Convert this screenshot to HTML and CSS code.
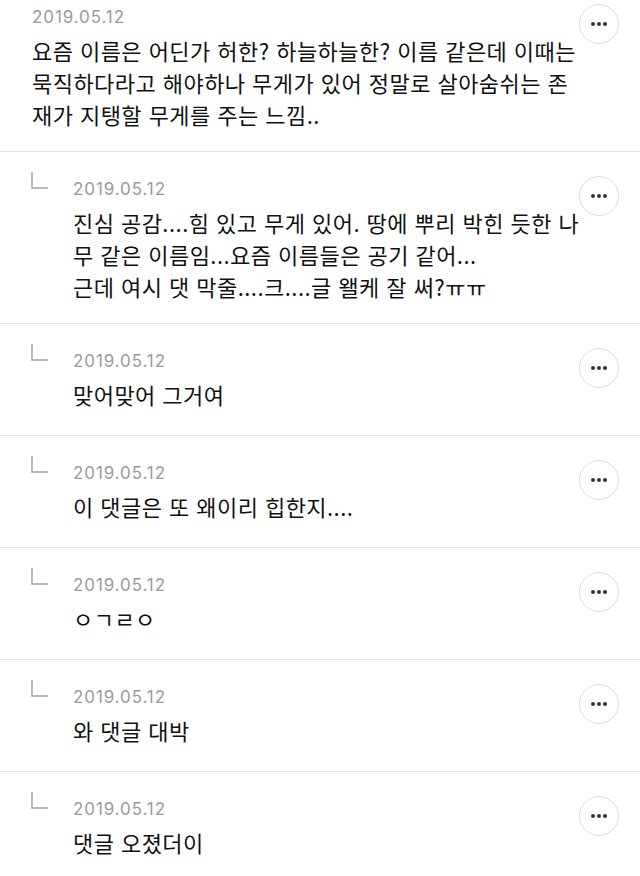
FILE: index.html
```html
<!DOCTYPE html>
<html lang="ko">
<head>
    <meta charset="UTF-8">
    <meta name="viewport" content="width=device-width, initial-scale=1.0">
    <title>댓글</title>
    <link rel="stylesheet" href="styles.css">
</head>
<body>
    <ul class="comments">
        <li class="comment">
            <div class="comment-body">
                <div class="comment-head">
                    <span class="date">2019.05.12</span>
                    <button class="more" aria-label="더보기"><i></i><i></i><i></i></button>
                </div>
                <p class="text">요즘 이름은 어딘가 허한? 하늘하늘한? 이름 같은데 이때는 묵직하다라고 해야하나 무게가 있어 정말로 살아숨쉬는 존재가 지탱할 무게를 주는 느낌..</p>
            </div>
        </li>
        <li class="comment reply">
            <svg class="reply-mark" width="17" height="17" viewBox="0 0 17 17"><path d="M1 0V16H17" fill="none" stroke="#a3a3a3" stroke-width="1.5"/></svg>
            <div class="comment-body">
                <div class="comment-head">
                    <span class="date">2019.05.12</span>
                    <button class="more" aria-label="더보기"><i></i><i></i><i></i></button>
                </div>
                <p class="text">진심 공감....힘 있고 무게 있어. 땅에 뿌리 박힌 듯한 나무 같은 이름임...요즘 이름들은 공기 같어...<br>근데 여시 댓 막줄....크....글 왤케 잘 써?ㅠㅠ</p>
            </div>
        </li>
        <li class="comment reply">
            <svg class="reply-mark" width="17" height="17" viewBox="0 0 17 17"><path d="M1 0V16H17" fill="none" stroke="#a3a3a3" stroke-width="1.5"/></svg>
            <div class="comment-body">
                <div class="comment-head">
                    <span class="date">2019.05.12</span>
                    <button class="more" aria-label="더보기"><i></i><i></i><i></i></button>
                </div>
                <p class="text">맞어맞어 그거여</p>
            </div>
        </li>
        <li class="comment reply">
            <svg class="reply-mark" width="17" height="17" viewBox="0 0 17 17"><path d="M1 0V16H17" fill="none" stroke="#a3a3a3" stroke-width="1.5"/></svg>
            <div class="comment-body">
                <div class="comment-head">
                    <span class="date">2019.05.12</span>
                    <button class="more" aria-label="더보기"><i></i><i></i><i></i></button>
                </div>
                <p class="text">이 댓글은 또 왜이리 힙한지....</p>
            </div>
        </li>
        <li class="comment reply">
            <svg class="reply-mark" width="17" height="17" viewBox="0 0 17 17"><path d="M1 0V16H17" fill="none" stroke="#a3a3a3" stroke-width="1.5"/></svg>
            <div class="comment-body">
                <div class="comment-head">
                    <span class="date">2019.05.12</span>
                    <button class="more" aria-label="더보기"><i></i><i></i><i></i></button>
                </div>
                <p class="text">ㅇㄱㄹㅇ</p>
            </div>
        </li>
        <li class="comment reply">
            <svg class="reply-mark" width="17" height="17" viewBox="0 0 17 17"><path d="M1 0V16H17" fill="none" stroke="#a3a3a3" stroke-width="1.5"/></svg>
            <div class="comment-body">
                <div class="comment-head">
                    <span class="date">2019.05.12</span>
                    <button class="more" aria-label="더보기"><i></i><i></i><i></i></button>
                </div>
                <p class="text">와 댓글 대박</p>
            </div>
        </li>
        <li class="comment reply">
            <svg class="reply-mark" width="17" height="17" viewBox="0 0 17 17"><path d="M1 0V16H17" fill="none" stroke="#a3a3a3" stroke-width="1.5"/></svg>
            <div class="comment-body">
                <div class="comment-head">
                    <span class="date">2019.05.12</span>
                    <button class="more" aria-label="더보기"><i></i><i></i><i></i></button>
                </div>
                <p class="text">댓글 오졌더이</p>
            </div>
        </li>
    </ul>
</body>
</html>
```

FILE: styles.css
```css
body {
    margin: 0;
    background: #fff;
    color: #111;
    font-family: "Noto Sans CJK KR", "Noto Sans", sans-serif;
}
.comments {
    list-style: none;
    margin: 0;
    padding: 0;
}
.comment {
    display: flex;
    align-items: flex-start;
    padding: 4px 21px 21px 32px;
    border-bottom: 1px solid #e6e6e6;
}
.comment.reply {
    padding-top: 20px;
    padding-left: 31px;
}
.reply-mark {
    flex: none;
    margin-right: 25px;
}
.reply .comment-body {
    margin-top: 4px;
}
.comment-body {
    flex: 1;
    min-width: 0;
}
.comment-head {
    display: flex;
    justify-content: space-between;
    align-items: flex-start;
    height: 26px;
}
.date {
    font-family: Inter, "Liberation Sans", sans-serif;
    font-size: 17px;
    letter-spacing: 0.9px;
    line-height: 26px;
    color: #9b9b9b;
}
.more {
    display: flex;
    align-items: center;
    justify-content: center;
    gap: 2px;
    width: 40px;
    height: 40px;
    padding: 0;
    border: 1px solid #dcdcdc;
    border-radius: 50%;
    background: #fff;
    cursor: pointer;
}
.more i {
    width: 4px;
    height: 4px;
    border-radius: 50%;
    background: #333;
}
.text {
    margin: 4px 36px 0 0;
    min-height: 36px;
    font-size: 22px;
    letter-spacing: 0.45px;
    line-height: 32px;
}
```
